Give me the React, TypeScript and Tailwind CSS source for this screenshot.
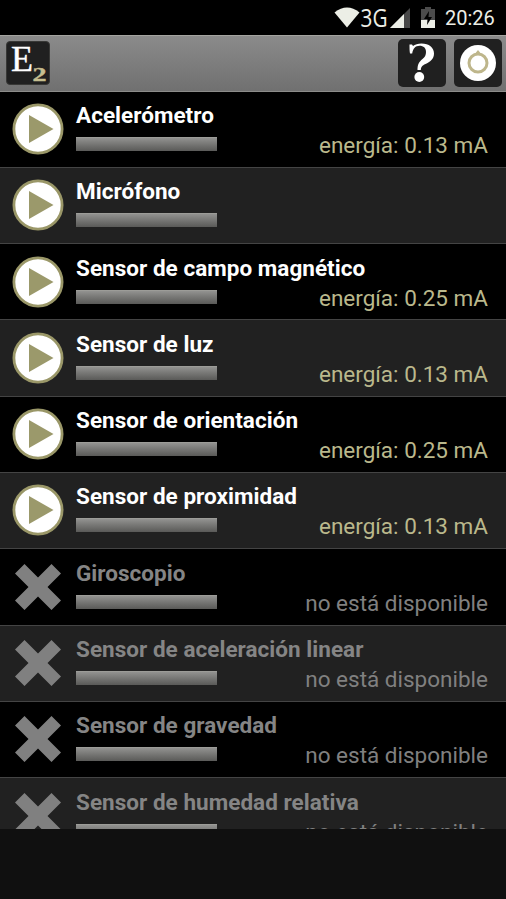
import clsx from "clsx"

type Sensor = {
  name: string
  power?: string
}

const sensors: Sensor[] = [
  { name: "Acelerómetro", power: "energía: 0.13 mA" },
  { name: "Micrófono", power: "" },
  { name: "Sensor de campo magnético", power: "energía: 0.25 mA" },
  { name: "Sensor de luz", power: "energía: 0.13 mA" },
  { name: "Sensor de orientación", power: "energía: 0.25 mA" },
  { name: "Sensor de proximidad", power: "energía: 0.13 mA" },
  { name: "Giroscopio" },
  { name: "Sensor de aceleración linear" },
  { name: "Sensor de gravedad" },
  { name: "Sensor de humedad relativa" },
]

function StatusBar() {
  return (
    <div className="flex h-[35px] shrink-0 items-center bg-black pl-[334px] text-[#eceee6]">
      <svg width="26" height="21" viewBox="0 0 26 21" className="shrink-0">
        <path d="M.5 5.5Q13-4.500 25.500 5.500L13 20.500Z" fill="currentColor" />
      </svg>
      <svg width="28" height="35" viewBox="0 0 28 35" className="shrink-0 font-['Open_Sans',sans-serif]">
        <text x="0.5" y="27" fontSize="25" textLength="27" lengthAdjust="spacingAndGlyphs" fill="currentColor">3G</text>
      </svg>
      <svg width="20" height="20" viewBox="0 0 20 20" className="ml-[2px] shrink-0">
        <path d="M20 0V20H0Z" fill="#484848" />
        <path d="M14 6V20H0Z" fill="currentColor" />
      </svg>
      <svg width="14" height="21" viewBox="0 0 14 21" className="ml-[11px] shrink-0">
        <path d="M0 2H4V0H10V2H14V13H0Z" fill="#4c4c4c" />
        <path d="M0 13H14V21H0Z" fill="currentColor" />
        <path d="M8 4L3 12H6.500L6 18L11 10H7.500Z" fill="#000" />
      </svg>
      <span className="ml-[10px] pt-[2px] text-[20px] leading-[33px]">20:26</span>
    </div>
  )
}

function Header() {
  return (
    <header className="flex h-[56.5px] shrink-0 items-center border-t border-b border-t-[#a4a4a0] border-b-[#8c8c8a] bg-linear-to-b from-[#8b8b8b] to-[#707070] pr-1 pl-[6px]">
      <div className="relative size-11 rounded-[4px] border border-[#383836] bg-[#202020] font-['Liberation_Serif',serif]">
        <svg width="42" height="42" viewBox="0 0 42 42">
          <text x="4" y="28.5" fontSize="35" textLength="22" lengthAdjust="spacingAndGlyphs" fill="#fff" stroke="#fff" strokeWidth="0.4">E</text>
          <text x="25.5" y="38.5" fontSize="18" fontWeight="bold" textLength="14" lengthAdjust="spacingAndGlyphs" fill="#c6be90" stroke="#c6be90" strokeWidth="0.4">2</text>
        </svg>
      </div>
      <button className="ml-auto flex size-12 items-center justify-center rounded-[5px] bg-[#202020]">
        <svg width="48" height="48" viewBox="0 0 48 48">
          <path
            d="M12 14.500C11.500 12 11.500 9 11.500 5.500H14L15 7C17 5.500 20 4.500 23.500 4.500C31 4.500 36 8.500 36 14.500C36 20 32 23 27.500 25C24 26.500 23 28 22.800 31H19.500C19.500 25 21 23 24.500 20C27 18 28 16 28 13C28 9 25.500 6.800 21.500 6.800C17.500 6.800 15 9.500 14.200 14.500Z"
            fill="#fff"
          />
          <circle cx="21.300" cy="38" r="4.900" fill="#fff" />
        </svg>
      </button>
      <button className="ml-2 size-12 rounded-[5px] bg-[#202020]">
        <svg width="48" height="48" viewBox="0 0 48 48">
          <circle cx="24" cy="24" r="18" fill="#fff" />
          <path d="M24 11L28 16H20Z" fill="#beb68b" />
          <circle cx="24" cy="24" r="9" fill="none" stroke="#beb68b" strokeWidth="3" />
        </svg>
      </button>
    </header>
  )
}

function PlayIcon() {
  return (
    <svg width="52" height="52" viewBox="0 0 52 52" className="shrink-0">
      <circle cx="26" cy="26" r="24.100" fill="#fff" stroke="#9a9768" strokeWidth="2.800" />
      <path d="M17 12V40L41.500 26Z" fill="#9b996b" />
    </svg>
  )
}

function CrossIcon() {
  return (
    <svg width="52" height="52" viewBox="0 0 52 52" className="shrink-0">
      <path d="M12.500 3L26 16.500L39.500 3L49 12.500L35.500 26L49 39.500L39.500 49L26 35.500L12.500 49L3 39.500L16.500 26L3 12.500Z" fill="#808080" />
    </svg>
  )
}

function SensorRow({ sensor, odd }: { sensor: Sensor; odd: boolean }) {
  const available = sensor.power !== undefined

  return (
    <li className={clsx("flex h-[76.3px] shrink-0 border-b border-[#444] pr-[18px] pl-3", odd ? "bg-[#212121]" : "bg-black")}>
      <div className="pt-[11.5px]">{available ? <PlayIcon /> : <CrossIcon />}</div>
      <div className="ml-3 flex-1 pt-[10.5px] text-[22.5px] leading-[26px] whitespace-nowrap">
        <h2 className={clsx("font-bold tracking-[0.03px]", available ? "text-white" : "text-[#858585]")}>{sensor.name}</h2>
        <div className="flex items-start justify-between">
          <div className="mt-[9px] h-[14px] w-[140.5px] border-t border-[#9c9c98] bg-linear-to-b from-[#929290] to-[#5a5a58]" />
          <p className={clsx("mt-1", available ? "text-[#bab88c]" : "text-[#808080]")}>{sensor.power ?? "no está disponible"}</p>
        </div>
      </div>
    </li>
  )
}

export default function App() {
  return (
    <div className="flex h-[899px] w-[506px] flex-col overflow-hidden bg-[#101010] font-[Roboto,sans-serif]">
      <StatusBar />
      <Header />
      <ul className="flex h-[737.5px] shrink-0 flex-col overflow-hidden">
        {sensors.map((sensor, i) => (
          <SensorRow key={sensor.name} sensor={sensor} odd={i % 2 === 1} />
        ))}
      </ul>
    </div>
  )
}
